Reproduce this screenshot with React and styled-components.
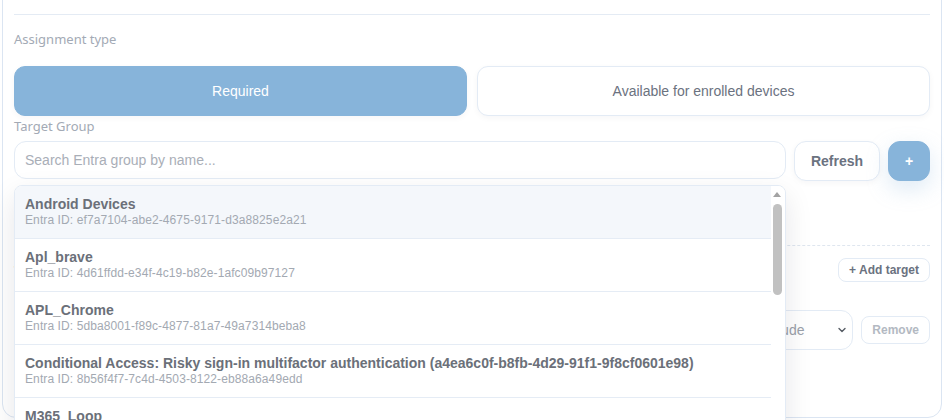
import React from "react";
import styled, { createGlobalStyle } from "styled-components";
import { ChevronDown } from "lucide-react";

const GlobalStyle = createGlobalStyle`
  html, body {
    margin: 0;
    padding: 0;
    height: 100%;
    overflow: hidden;
    background: #ffffff;
  }
  body {
    font-family: "Noto Sans", "Liberation Sans", sans-serif;
  }
  *, *::before, *::after {
    box-sizing: border-box;
  }
`;

const groups = [
  { name: "Android Devices", id: "ef7a7104-abe2-4675-9171-d3a8825e2a21" },
  { name: "Apl_brave", id: "4d61ffdd-e34f-4c19-b82e-1afc09b97127" },
  { name: "APL_Chrome", id: "5dba8001-f89c-4877-81a7-49a7314beba8" },
  {
    name: "Conditional Access: Risky sign-in multifactor authentication (a4ea6c0f-b8fb-4d29-91f1-9f8cf0601e98)",
    id: "8b56f4f7-7c4d-4503-8122-eb88a6a49edd",
  },
  { name: "M365_Loop", id: "2c9e41a0-7b3d-4f18-a6c2-5e0d9b71f342" },
  { name: "MacOS Devices", id: "91b3c7e2-4a05-4d8f-b1e6-0f2a7c93d581" },
  { name: "Marketing", id: "c04d2e8f-63a1-4b97-8e25-d7f1a0b6c439" },
  { name: "Pilot Ring", id: "6e2f9a14-d8b3-4c70-a5e1-3b84f0c2d967" },
];

const Card = styled.section`
  margin: -20px 2px 0 2px;
  border: 1px solid #dbe5f2;
  border-radius: 14px;
  padding: 12px 11px 12px;
  background: #ffffff;
`;

const Divider = styled.div`
  margin-top: 21px;
  height: 1px;
  background: #e4ebf4;
`;

const FieldLabel = styled.div`
  margin-top: ${(p) => p.$gap}px;
  font-size: 13px;
  line-height: 16px;
  color: #a3aab5;
`;

const TypeRow = styled.div`
  margin-top: 19px;
  display: grid;
  grid-template-columns: 1fr 1fr;
  gap: 10px;
`;

const TypeButton = styled.button`
  height: 50px;
  padding: 0 0 1px;
  border-radius: 11px;
  font-family: "Liberation Sans", Arial, sans-serif;
  font-size: 14px;
  cursor: pointer;
  border: 1px solid ${(p) => (p.$active ? "#87b4da" : "#e3ebf5")};
  background: ${(p) => (p.$active ? "#87b4da" : "#ffffff")};
  color: ${(p) => (p.$active ? "#ffffff" : "#6b7280")};
  box-shadow: 0 2px 6px rgba(15, 23, 42, 0.04);
`;

const SearchRow = styled.div`
  margin-top: 7px;
  display: flex;
  align-items: flex-start;
  gap: 8px;
`;

const SearchWrap = styled.div`
  position: relative;
  flex: 1;
`;

const SearchInput = styled.input`
  display: block;
  width: 100%;
  height: 38px;
  padding: 0 10px;
  border: 1px solid #e3ebf5;
  border-radius: 12px;
  outline: none;
  font-family: "Liberation Sans", Arial, sans-serif;
  font-size: 14px;
  color: #374151;
  background: #ffffff;

  &::placeholder {
    color: #a9aeb7;
  }
`;

const ActionButton = styled.button`
  height: 40px;
  width: ${(p) => p.$width}px;
  padding: 0;
  border-radius: 12px;
  font-family: "Liberation Sans", Arial, sans-serif;
  font-size: 14px;
  font-weight: 700;
  cursor: pointer;
  border: 1px solid ${(p) => (p.$primary ? "#87b4da" : "#e3ebf5")};
  background: ${(p) => (p.$primary ? "#87b4da" : "#ffffff")};
  color: ${(p) => (p.$primary ? "#ffffff" : "#6b7280")};
  box-shadow: ${(p) =>
    p.$primary
      ? "0 8px 22px rgba(135, 180, 218, 0.28)"
      : "0 2px 6px rgba(15, 23, 42, 0.04)"};
`;

/* floating results panel under the search box */
const Dropdown = styled.div`
  position: absolute;
  top: calc(100% + 6px);
  left: 0;
  right: 0;
  z-index: 5;
  height: 300px;
  overflow: hidden;
  background: #ffffff;
  border: 1px solid #e3ebf5;
  border-radius: 8px;
  box-shadow: 0 10px 28px rgba(15, 23, 42, 0.1);
`;

const OptionList = styled.ul`
  margin: 0;
  padding: 0 14px 0 0;
  list-style: none;
`;

const Option = styled.li`
  padding: 10px 10px;
  border-bottom: 1px solid #e5ecf5;
  background: ${(p) => (p.$active ? "#f4f7fb" : "#ffffff")};
  font-family: "Liberation Sans", Arial, sans-serif;
  cursor: pointer;
`;

const OptionName = styled.div`
  font-size: 14px;
  line-height: 16px;
  font-weight: 700;
  color: #6b7079;
  white-space: nowrap;
`;

const OptionId = styled.div`
  margin-top: 1px;
  font-size: 12px;
  line-height: 15px;
  letter-spacing: 0.1px;
  color: #a3a9b2;
`;

const ScrollRail = styled.div`
  position: absolute;
  top: 0;
  right: 0;
  bottom: 0;
  width: 14px;
  background: #ffffff;
`;

const ScrollArrow = styled.div`
  position: absolute;
  top: 6px;
  left: 2px;
  width: 0;
  height: 0;
  border-left: 4.5px solid transparent;
  border-right: 4.5px solid transparent;
  border-bottom: 5px solid #a3a3a3;
`;

const ScrollThumb = styled.div`
  position: absolute;
  top: 18px;
  left: 2px;
  width: 9px;
  height: 91px;
  border-radius: 5px;
  background: #c1c1c1;
`;

const TargetsSection = styled.div`
  margin-top: 64px;
  border-top: 1px dashed #dfe6ef;
  padding: 12px 0 55px;
`;

const TargetsHeader = styled.div`
  display: flex;
  align-items: center;
  justify-content: space-between;
`;

const SectionTitle = styled.span`
  font-size: 13px;
  font-weight: 600;
  color: #6b7280;
`;

const SmallButton = styled.button`
  height: ${(p) => p.$height}px;
  padding: 0 ${(p) => p.$pad}px;
  border-radius: 8px;
  border: 1px solid #e3ebf5;
  background: #ffffff;
  font-family: "Liberation Sans", Arial, sans-serif;
  font-size: 12px;
  font-weight: 700;
  color: ${(p) => (p.$muted ? "#b3b9c2" : "#6b7280")};
  cursor: pointer;
`;

const TargetRow = styled.div`
  margin-top: 28px;
  display: flex;
  align-items: center;
  gap: 8px;
`;

const TargetName = styled.div`
  flex: 1;
  height: 40px;
  display: flex;
  align-items: center;
  padding: 0 12px;
  border: 1px solid #e3ebf5;
  border-radius: 12px;
  font-family: "Liberation Sans", Arial, sans-serif;
  font-size: 14px;
  color: #6b7280;
`;

const SelectWrap = styled.div`
  position: relative;
  width: 110px;

  svg {
    position: absolute;
    right: 5px;
    top: 50%;
    transform: translateY(-50%);
    color: #555b63;
    pointer-events: none;
  }
`;

const ModeSelect = styled.select`
  display: block;
  width: 100%;
  height: 40px;
  padding: 0 20px 0 15px;
  appearance: none;
  border: 1px solid #e3ebf5;
  border-radius: 12px;
  background: #ffffff;
  font-family: "Liberation Sans", Arial, sans-serif;
  font-size: 14px;
  color: #9aa0a9;
  outline: none;
`;

export default function App() {
  return (
    <>
      <GlobalStyle />
      <Card>
        <Divider />
        <FieldLabel $gap={16}>Assignment type</FieldLabel>
        <TypeRow>
          <TypeButton $active>Required</TypeButton>
          <TypeButton>Available for enrolled devices</TypeButton>
        </TypeRow>

        <FieldLabel $gap={2}>Target Group</FieldLabel>
        <SearchRow>
          <SearchWrap>
            <SearchInput placeholder="Search Entra group by name..." />
            <Dropdown>
              <OptionList>
                {groups.map((g, i) => (
                  <Option key={g.id} $active={i === 0}>
                    <OptionName>{g.name}</OptionName>
                    <OptionId>Entra ID: {g.id}</OptionId>
                  </Option>
                ))}
              </OptionList>
              <ScrollRail>
                <ScrollArrow />
                <ScrollThumb />
              </ScrollRail>
            </Dropdown>
          </SearchWrap>
          <ActionButton $width={86}>Refresh</ActionButton>
          <ActionButton $width={42} $primary>
            +
          </ActionButton>
        </SearchRow>

        <TargetsSection>
          <TargetsHeader>
            <SectionTitle>Targets</SectionTitle>
            <SmallButton $height={24} $pad={10}>
              + Add target
            </SmallButton>
          </TargetsHeader>
          <TargetRow>
            <TargetName>All Devices</TargetName>
            <SelectWrap>
              <ModeSelect defaultValue="include">
                <option value="include">Include</option>
                <option value="exclude">Exclude</option>
              </ModeSelect>
              <ChevronDown size={12} strokeWidth={2.75} />
            </SelectWrap>
            <SmallButton $height={28} $pad={10} $muted>
              Remove
            </SmallButton>
          </TargetRow>
        </TargetsSection>
      </Card>
    </>
  );
}
